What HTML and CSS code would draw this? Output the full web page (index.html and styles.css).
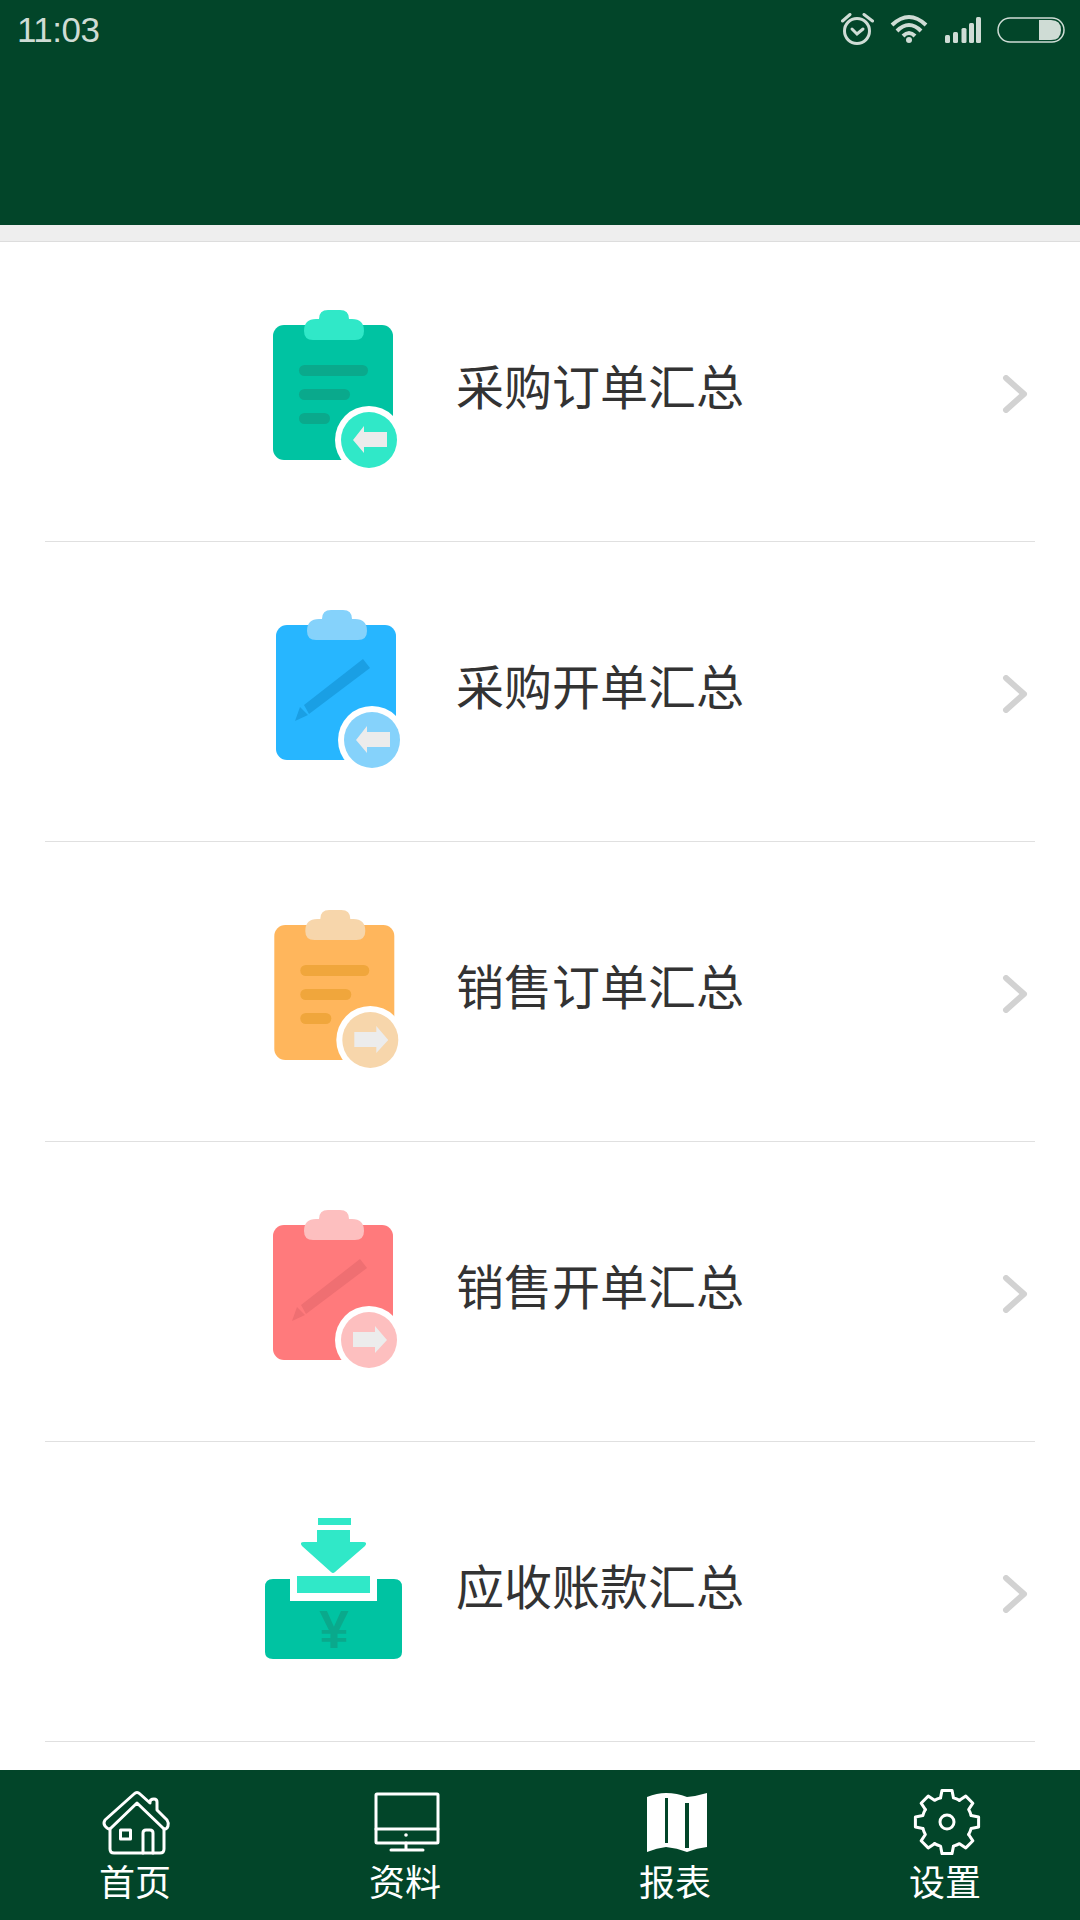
FILE: index.html
```html
<!DOCTYPE html>
<html>
<head>
    <meta charset="utf-8">
    <link rel="stylesheet" href="styles.css">
</head>
<body>
    <!-- Shared icon parts -->
    <svg class="defs">
        <defs>
            <g id="board">
                <rect class="c-body" x="0" y="0" width="120" height="135" rx="11"/>
                <path class="c-light" d="M31 6 Q31 -6 43 -6 H46 Q46 -15 55 -15 H67 Q76 -15 76 -6 H79 Q91 -6 91 6 Q91 15 82 15 H40 Q31 15 31 6Z"/>
            </g>
            <g id="lines">
                <rect class="c-dark" x="26" y="40" width="69" height="11" rx="5.5"/>
                <rect class="c-dark" x="26" y="64" width="51" height="11" rx="5.5"/>
                <rect class="c-dark" x="26" y="88" width="31" height="11" rx="5.5"/>
            </g>
            <g id="pencil">
                <polygon class="c-dark" points="87,34 94,43 33,89 28,80"/>
                <polygon class="c-dark" points="24,82 32,90 19,96"/>
            </g>
            <g id="badge-left">
                <circle class="c-ring" cx="96" cy="115" r="34"/>
                <circle class="c-light" cx="96" cy="115" r="28"/>
                <polygon class="c-arrow" points="80,115 91,101 91,107 114,107 114,122 91,122 91,128"/>
            </g>
            <g id="badge-right">
                <circle class="c-ring" cx="96" cy="115" r="34"/>
                <circle class="c-light" cx="96" cy="115" r="28"/>
                <polygon class="c-arrow" points="114,115 102,101 102,107 80,107 80,122 102,122 102,128"/>
            </g>
            <path id="chevron" d="M6 3 L24 19 L6 35"/>
            <path id="gear-tooth" d="M24.15 -6.47 L31.6 -5 L31.6 5 L24.15 6.47 A25 25 0 0 1 21.65 12.5"/>
        </defs>
    </svg>

    <header class="top">
        <div class="status">
            <span class="time">11:03</span>
            <div class="status-icons">
                <svg class="stat-line" width="33" height="33" viewBox="0 0 33 33">
                    <circle cx="16" cy="18" r="12.5"/>
                    <path d="M11 16 L16 21 L22 16"/>
                    <path d="M1.5 8 L9 1.5 M23 1.5 L31.5 8"/>
                </svg>
                <svg class="stat-wifi" width="38" height="33" viewBox="0 0 38 33">
                    <path d="M2 12 Q19 -4 36 12"/>
                    <path d="M7 18 Q19 6 31 18"/>
                    <path d="M13 23 Q19 17 25 23"/>
                    <circle cx="19" cy="27" r="3"/>
                </svg>
                <svg class="stat-fill" width="37" height="33" viewBox="0 0 37 33">
                    <rect x="1" y="22" width="5" height="8" rx="1.5"/>
                    <rect x="9" y="19" width="5" height="11" rx="1.5"/>
                    <rect x="17.5" y="15" width="5" height="15" rx="1.5"/>
                    <rect x="25" y="10" width="5" height="20" rx="1.5"/>
                    <rect x="32" y="4" width="5" height="26" rx="1.5"/>
                </svg>
                <svg class="stat-battery" width="68" height="33" viewBox="0 0 68 33">
                    <rect class="batt-case" x="1" y="5" width="66" height="24" rx="12"/>
                    <path class="batt-level" d="M42 7 H54 Q64 7 64 17 Q64 27 54 27 H42Z"/>
                </svg>
            </div>
        </div>
    </header>
    <div class="band"></div>

    <main class="list">
        <a class="row green">
            <svg class="row-icon" viewBox="0 0 170 170">
                <g transform="translate(13 23)">
                    <use href="#board"/><use href="#lines"/><use href="#badge-left"/>
                </g>
            </svg>
            <span class="row-label">采购订单汇总</span>
            <svg class="row-arrow" viewBox="0 0 28 38"><use href="#chevron"/></svg>
        </a>
        <a class="row blue">
            <svg class="row-icon" viewBox="0 0 170 170">
                <g transform="translate(16 23)">
                    <use href="#board"/><use href="#pencil"/><use href="#badge-left"/>
                </g>
            </svg>
            <span class="row-label">采购开单汇总</span>
            <svg class="row-arrow" viewBox="0 0 28 38"><use href="#chevron"/></svg>
        </a>
        <a class="row orange">
            <svg class="row-icon" viewBox="0 0 170 170">
                <g transform="translate(14.3 23)">
                    <use href="#board"/><use href="#lines"/><use href="#badge-right"/>
                </g>
            </svg>
            <span class="row-label">销售订单汇总</span>
            <svg class="row-arrow" viewBox="0 0 28 38"><use href="#chevron"/></svg>
        </a>
        <a class="row red">
            <svg class="row-icon" viewBox="0 0 170 170">
                <g transform="translate(13 23)">
                    <use href="#board"/><use href="#pencil"/><use href="#badge-right"/>
                </g>
            </svg>
            <span class="row-label">销售开单汇总</span>
            <svg class="row-arrow" viewBox="0 0 28 38"><use href="#chevron"/></svg>
        </a>
        <a class="row green">
            <svg class="row-icon" viewBox="0 0 170 170">
                <path class="c-body" d="M30 77 V99 H117 V77 H134 Q142 77 142 85 V150 Q142 157 134 157 H13 Q5 157 5 150 V85 Q5 77 13 77Z"/>
                <rect class="c-light" x="37" y="74" width="73" height="17"/>
                <rect class="c-light" x="58" y="16" width="33" height="7"/>
                <path class="c-light" d="M57 28 H90 V40 H103 Q108 40 105 44 L75 70 Q73 72 71 70 L42 44 Q39 40 44 40 H57Z"/>
                <text class="yen" x="74" y="146">¥</text>
            </svg>
            <span class="row-label">应收账款汇总</span>
            <svg class="row-arrow" viewBox="0 0 28 38"><use href="#chevron"/></svg>
        </a>
    </main>

    <nav class="tabs">
        <a class="tab">
            <svg class="tab-icon" viewBox="0 0 80 70">
                <path d="M39 6 L10 32 Q8 35 10 38 L12 40 Q14 42 16 40 L42 15 L68 40 Q70 42 72 40 L73 38 Q74 35 72 32 L62 22 V14 Q62 11 59 11 Q55 11 55 14 V15 L45 6 Q42 3 39 6Z"/>
                <path d="M15 41 V61 Q15 65 19 65 H65 Q69 65 69 61 V41"/>
                <path d="M48 65 V45 Q48 42 51 42 H55 Q58 42 58 45 V65"/>
                <rect x="25.5" y="42" width="10" height="9"/>
            </svg>
            <span class="tab-label">首页</span>
        </a>
        <a class="tab">
            <svg class="tab-icon" viewBox="0 0 80 70">
                <rect x="11" y="6" width="62" height="49" rx="1"/>
                <path d="M11 41 H73 M41 55 V62 M26 62 H58"/>
                <circle class="tab-solid" cx="41" cy="47" r="1.8"/>
            </svg>
            <span class="tab-label">资料</span>
        </a>
        <a class="tab">
            <svg class="tab-icon" viewBox="0 0 80 70">
                <path class="tab-solid" d="M12 9 Q22 5 31 5 Q42 5 52 9 Q62 8 72 5 V59 Q62 60 52 64 Q42 60 31 59 Q22 60 12 64Z"/>
                <rect class="tab-gap" x="30" y="10" width="3" height="45"/>
                <rect class="tab-gap" x="50" y="15" width="4" height="45"/>
            </svg>
            <span class="tab-label">报表</span>
        </a>
        <a class="tab">
            <svg class="tab-icon" viewBox="0 0 80 70">
                <g transform="translate(42 34)">
                    <use href="#gear-tooth"/>
                    <use href="#gear-tooth" transform="rotate(45)"/>
                    <use href="#gear-tooth" transform="rotate(90)"/>
                    <use href="#gear-tooth" transform="rotate(135)"/>
                    <use href="#gear-tooth" transform="rotate(180)"/>
                    <use href="#gear-tooth" transform="rotate(225)"/>
                    <use href="#gear-tooth" transform="rotate(270)"/>
                    <use href="#gear-tooth" transform="rotate(315)"/>
                    <circle r="7"/>
                </g>
            </svg>
            <span class="tab-label">设置</span>
        </a>
    </nav>
</body>
</html>
```

FILE: styles.css
```css
body {
    margin: 0;
    height: 1920px;
    display: flex;
    flex-direction: column;
    background: #fff;
    font-family: "Noto Sans CJK SC", "Liberation Sans", sans-serif;
    overflow: hidden;
}

.defs {
    display: none;
}

/* Top bar */
.top {
    height: 225px;
    background: #024529;
}

.status {
    display: flex;
    justify-content: space-between;
    padding: 13px 15px 0 17px;
}

.time {
    font-family: "Liberation Sans", sans-serif;
    font-size: 35px;
    line-height: 34px;
    letter-spacing: -0.5px;
    color: #cfdcd5;
}

.status-icons {
    display: flex;
    gap: 16px;
}

.stat-line circle, .stat-line path {
    fill: none;
    stroke: #cfdcd5;
    stroke-width: 3;
    stroke-linecap: round;
}

.stat-wifi path {
    fill: none;
    stroke: #cfdcd5;
    stroke-width: 4;
}

.stat-wifi circle, .stat-fill rect {
    fill: #cfdcd5;
}

.batt-case {
    fill: none;
    stroke: #cfdcd5;
    stroke-width: 1.5;
}

.batt-level {
    fill: #cfdcd5;
}

.band {
    height: 16px;
    background: #eee;
    border-bottom: 1px solid #ddd;
}

/* List */
.list {
    flex: 1;
    padding: 0 45px;
    overflow: hidden;
}

.row {
    box-sizing: border-box;
    height: 300px;
    display: flex;
    align-items: center;
    padding: 0 7px 0 215px;
    border-bottom: 1px solid #e0e0e0;
}

.row-icon {
    width: 170px;
    height: 170px;
    flex-shrink: 0;
    margin-bottom: 9px;
}

.row-label {
    margin: 0 0 16px 26px;
    font-size: 48px;
    color: #333;
}

.row-arrow {
    width: 28px;
    height: 38px;
    margin: 4px 0 0 auto;
    fill: none;
    stroke: #d2d2d2;
    stroke-width: 6;
    stroke-linecap: round;
    stroke-linejoin: round;
}

.green {
    --body: #00c3a2;
    --light: #30e8c8;
    --dark: #0aa98c;
}

.blue {
    --body: #27b6ff;
    --light: #85d2fb;
    --dark: #1a9fe4;
}

.orange {
    --body: #ffb65c;
    --light: #f7d6ab;
    --dark: #f0a63c;
}

.red {
    --body: #ff7a7c;
    --light: #fdbfbf;
    --dark: #ef6f72;
}

.c-body { fill: var(--body); }
.c-light { fill: var(--light); }
.c-dark { fill: var(--dark); }
.c-ring { fill: #fff; }
.c-arrow { fill: #ececec; }

.yen {
    font-family: "Liberation Sans", sans-serif;
    font-size: 53px;
    font-weight: bold;
    text-anchor: middle;
    fill: var(--dark);
}

/* Bottom tabs */
.tabs {
    height: 150px;
    display: grid;
    grid-template-columns: repeat(4, 1fr);
    background: #024529;
}

.tab {
    display: flex;
    flex-direction: column;
    align-items: center;
    padding-top: 18px;
}

.tab-icon {
    width: 80px;
    height: 70px;
    fill: none;
    stroke: #fff;
    stroke-width: 3;
    stroke-linecap: round;
    stroke-linejoin: round;
}

.tab-solid {
    fill: #fff;
    stroke: none;
}

.tab-gap {
    fill: #024529;
    stroke: none;
}

.tab-label {
    font-size: 36px;
    line-height: 44px;
    color: #fff;
}
```
